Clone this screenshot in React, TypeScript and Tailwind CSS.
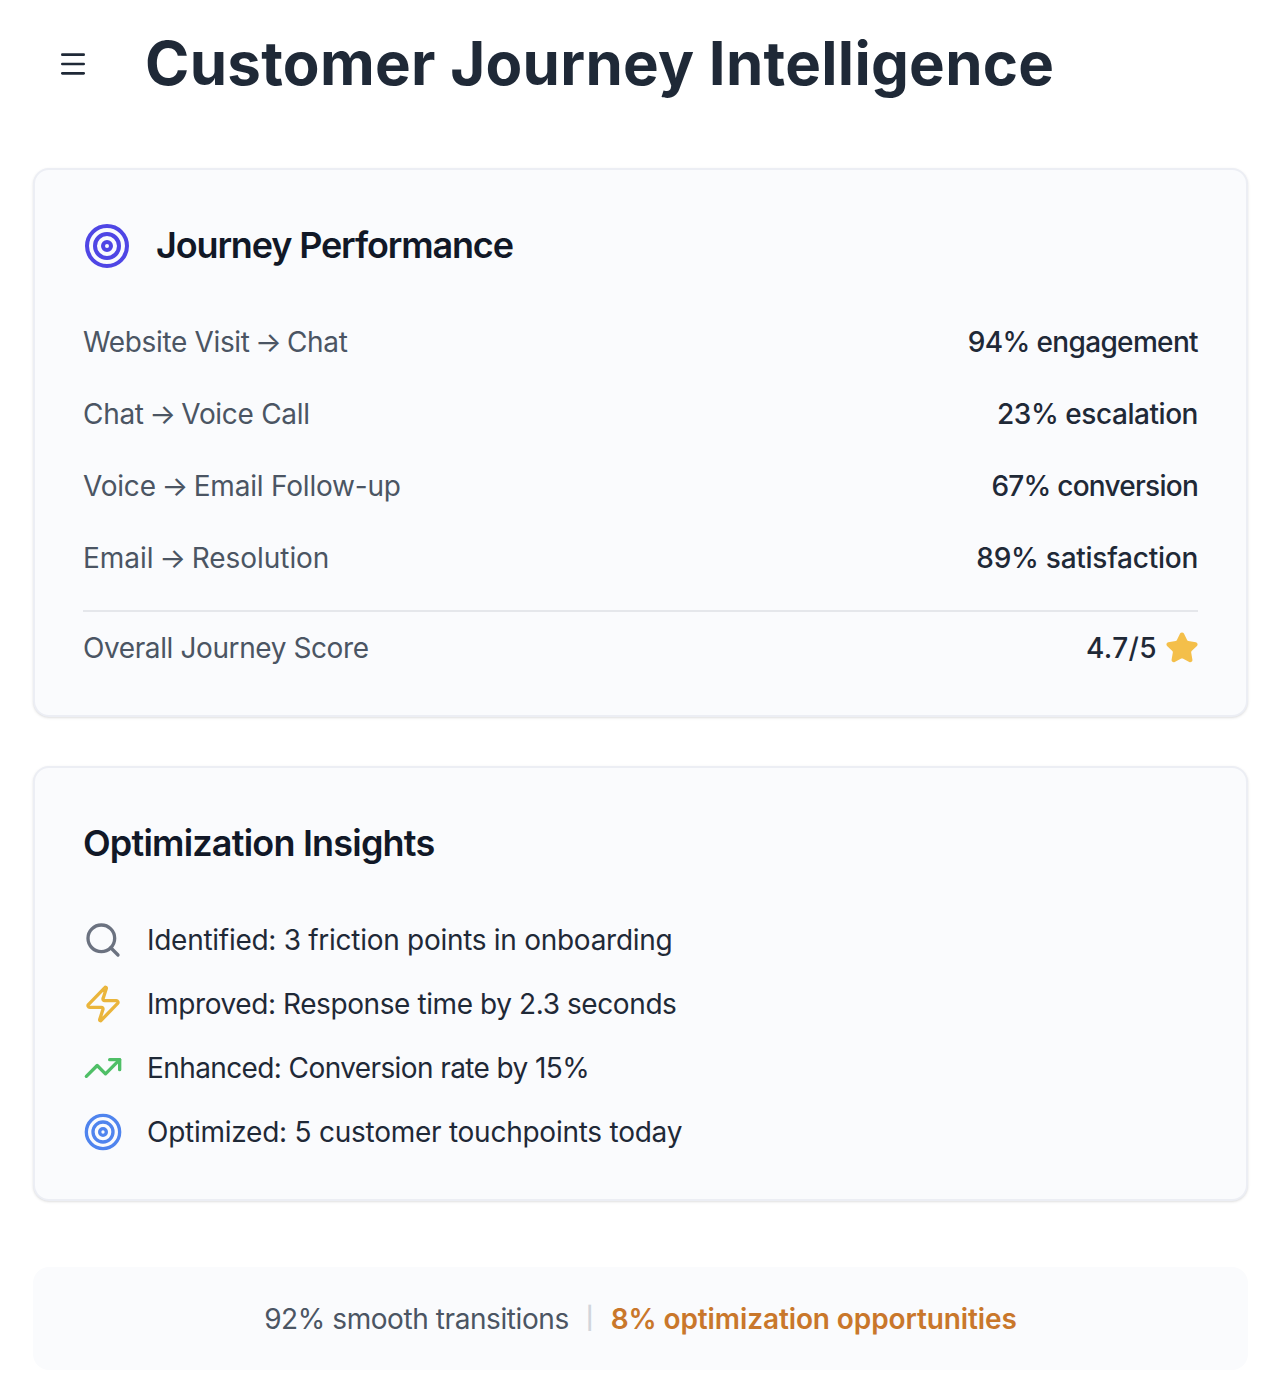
import { Menu, Target, Search, Zap, TrendingUp, Star } from 'lucide-react';

const rows = [
  { from: 'Website Visit', to: 'Chat', value: '94% engagement', labelClass: 'tracking-[-0.35px]', valueClass: 'tracking-[-0.65px]' },
  { from: 'Chat', to: 'Voice Call', value: '23% escalation', labelClass: 'tracking-[-0.3px]', valueClass: 'tracking-[-0.45px]' },
  { from: 'Voice', to: 'Email Follow-up', value: '67% conversion', labelClass: 'tracking-[-0.2px]', valueClass: 'tracking-[-0.75px]' },
  { from: 'Email', to: 'Resolution', value: '89% satisfaction', labelClass: 'tracking-[-0.05px]', valueClass: 'tracking-[-0.25px]' },
];

const insights = [
  { icon: <Search className="w-10 h-10 text-[#6b7280]" strokeWidth={2} />, text: 'Identified: 3 friction points in onboarding', textClass: 'tracking-[-0.28px]' },
  { icon: <Zap className="w-10 h-10 text-[#eab53c]" strokeWidth={2} />, text: 'Improved: Response time by 2.3 seconds', textClass: 'tracking-[-0.41px]' },
  { icon: <TrendingUp className="w-10 h-10 text-[#4fbf67]" strokeWidth={2} />, text: 'Enhanced: Conversion rate by 15%', textClass: 'tracking-[-0.6px]' },
  { icon: <Target className="w-10 h-10 text-[#4f84ee]" strokeWidth={2} />, text: 'Optimized: 5 customer touchpoints today', textClass: 'tracking-[-0.25px]' },
];

const App = () => {
  return (
    <div className="w-[1280px] h-[1392px] bg-white font-['Inter',sans-serif] pl-[33px] pr-[32px] overflow-hidden">
      <header className="h-[128px] flex items-center">
        <Menu className="w-8 h-8 ml-[24px] text-[#1f2937]" strokeWidth={2} />
        <h1 className="ml-[56px] -mt-[2px] text-[60px] leading-none font-bold tracking-[0.28px] text-[#1f2937]">Customer Journey Intelligence</h1>
      </header>

      <section className="mt-[40px] border-2 border-[#eceef4] rounded-2xl bg-[#fafbfd] shadow-sm px-[48px] pt-[47px] h-[549px]">
        <div className="flex items-center h-[56px]">
          <Target className="w-12 h-12 mt-[2px] text-[#4f46e5]" strokeWidth={2} />
          <h2 className="ml-[25px] text-[36px] font-semibold tracking-[-1.15px] text-[#111827]">Journey Performance</h2>
        </div>
        <div className="mt-[33px]">
          {rows.map((row) => (
            <div key={row.value} className="flex justify-between items-center h-[72px] text-[28px]">
              <span className={`text-[#4b5563] ${row.labelClass}`}>
                {row.from} <span className="-mx-[2px]">→</span> {row.to}
              </span>
              <span className={`font-medium text-[#1f2937] ${row.valueClass}`}>{row.value}</span>
            </div>
          ))}
        </div>
        <div className="flex justify-between items-center mt-[16px] border-t-2 border-[#e5e7eb] pt-[15px] text-[28px]">
          <span className="tracking-[-0.4px] text-[#4b5563]">Overall Journey Score</span>
          <span className="flex items-center font-medium tracking-[0.4px] text-[#1f2937]">
            4.7/5
            <Star className="ml-[8px] -mr-[1px] w-[34px] h-[34px] text-[#f4bf4a] fill-[#f4bf4a]" />
          </span>
        </div>
      </section>

      <section className="mt-[49px] border-2 border-[#eceef4] rounded-2xl bg-[#fafbfd] shadow-sm px-[48px] pt-[47px] h-[435px]">
        <h2 className="text-[36px] leading-[56px] font-semibold tracking-[-0.8px] text-[#111827]">Optimization Insights</h2>
        <div className="mt-[37px]">
          {insights.map((item) => (
            <div key={item.text} className="flex items-center h-[64px]">
              {item.icon}
              <span className={`ml-[24px] text-[28px] text-[#1f2937] ${item.textClass}`}>{item.text}</span>
            </div>
          ))}
        </div>
      </section>

      <footer className="mt-[66px] h-[103px] rounded-2xl bg-[#fafbfd] flex items-center justify-center text-[28px]">
        <span className="tracking-[-0.42px] text-[#4b5563]">92% smooth transitions</span>
        <span className="mx-[17px] text-[22px] font-semibold text-[#d1d5db]">|</span>
        <span className="font-semibold tracking-[-0.1px] text-[#c9772b]">8% optimization opportunities</span>
      </footer>
    </div>
  );
};

export default App;
